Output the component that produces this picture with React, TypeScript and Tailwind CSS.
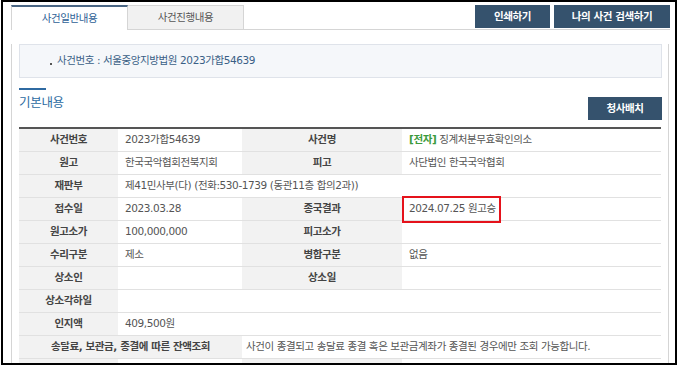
import React from 'react';

const FONT = "font-['DejaVu_Sans','Noto_Sans_CJK_KR',sans-serif]";

const label = 'bg-[#f2f2f2] text-center font-bold text-[#444] border-b border-[#e1e1e1]';
const value = 'pl-[7px] text-[#555] border-b border-[#e1e1e1] whitespace-nowrap';

export default function App() {
  return (
    <div className={`w-[680px] h-[369px] bg-white overflow-hidden text-[10.5px] tracking-[-0.4px] ${FONT}`}>
      <div className="ml-[1px] w-[676px] h-[365px] border-2 border-black overflow-hidden">
        {/* tabs + top buttons */}
        <div className="ml-[8px] w-[658px] pt-[3px] flex">
          <div className="w-[117px] h-[25px] bg-white border-t-2 border-t-[#4a6684] border-x border-x-[#d5d5d5] flex items-center justify-center text-[#2e5f96]">
            사건일반내용
          </div>
          <div className="w-[116px] h-[25px] bg-[#f1f1f1] border-t border-r border-b border-[#d5d5d5] flex items-center justify-center text-[#555]">
            사건진행내용
          </div>
          <div className="flex-1 h-[25px] border-b border-[#d5d5d5] flex justify-end items-start gap-[4px] -mr-[1px]">
            <button className="w-[75px] h-[23px] bg-[#35526d] text-white font-bold">인쇄하기</button>
            <button className="w-[116px] h-[23px] bg-[#35526d] text-white font-bold">나의 사건 검색하기</button>
          </div>
        </div>

        {/* content box */}
        <div className="ml-[8px] w-[658px] h-[400px] border-x border-[#d5d5d5] pl-[7px] pr-[6px]">
          <div className="mt-[14px] h-[34px] bg-[#f5f7fa] border border-[#dfe3ea] flex items-center pl-[30px] text-[#3a5f86]">
            <span className="w-[2px] h-[2px] bg-[#555] mr-[5px] mt-[5px]" />
            <span>사건번호 : 서울중앙지방법원 2023가합54639</span>
          </div>

          <div className="mt-[10px] flex justify-between items-start">
            <div>
              <div className="w-[27px] h-[2px] bg-[#2f6aa1]" />
              <div className="mt-[4px] leading-[17px] text-[12.5px] tracking-[-0.3px] text-[#2d6ca2]">기본내용</div>
            </div>
            <button className="mt-[9px] w-[74px] h-[23px] bg-[#35526d] text-white font-bold">청사배치</button>
          </div>

          <table className="mt-[7px] w-[642px] border-collapse border-t-2 border-[#555] table-fixed">
            <colgroup>
              <col className="w-[99px]" />
              <col className="w-[124px]" />
              <col className="w-[160px]" />
              <col className="w-[259px]" />
            </colgroup>
            <tbody>
              <tr className="h-[23px]">
                <td className={label}>사건번호</td>
                <td className={value}>2023가합54639</td>
                <td className={label}>사건명</td>
                <td className={value}>
                  <span className="text-[#3c9a3c] font-bold">[전자]</span> 징계처분무효확인의소
                </td>
              </tr>
              <tr className="h-[23px]">
                <td className={label}>원고</td>
                <td className={value}>한국국악협회전북지회</td>
                <td className={label}>피고</td>
                <td className={value}>사단법인 한국국악협회</td>
              </tr>
              <tr className="h-[23px]">
                <td className={label}>재판부</td>
                <td className={value} colSpan={3}>제41민사부(다) (전화:530-1739 (동관11층 합의2과))</td>
              </tr>
              <tr className="h-[23px]">
                <td className={label}>접수일</td>
                <td className={value}>2023.03.28</td>
                <td className={label}>종국결과</td>
                <td className={`${value} relative`}>
                  2024.07.25 원고승
                  <span className="absolute left-0 top-[-2px] w-[99px] h-[27px] border-2 border-[#e5121b]" />
                </td>
              </tr>
              <tr className="h-[23px]">
                <td className={label}>원고소가</td>
                <td className={value}>100,000,000</td>
                <td className={label}>피고소가</td>
                <td className={value}></td>
              </tr>
              <tr className="h-[23px]">
                <td className={label}>수리구분</td>
                <td className={value}>제소</td>
                <td className={label}>병합구분</td>
                <td className={value}>없음</td>
              </tr>
              <tr className="h-[23px]">
                <td className={label}>상소인</td>
                <td className={value}></td>
                <td className={label}>상소일</td>
                <td className={value}></td>
              </tr>
              <tr className="h-[23px]">
                <td className={label}>상소각하일</td>
                <td className={value} colSpan={3}></td>
              </tr>
              <tr className="h-[23px]">
                <td className={label}>인지액</td>
                <td className={value} colSpan={3}>409,500원</td>
              </tr>
              <tr className="h-[23px]">
                <td className={label} colSpan={2}>송달료, 보관금, 종결에 따른 잔액조회</td>
                <td className={`${value} !pl-[4px]`} colSpan={2}>
                  사건이 종결되고 송달료 종결 혹은 보관금계좌가 종결된 경우에만 조회 가능합니다.
                </td>
              </tr>
              <tr className="h-[23px]">
                <td className={label}></td>
                <td className={value}></td>
                <td className={label}></td>
                <td className={value}></td>
              </tr>
            </tbody>
          </table>
        </div>
      </div>
    </div>
  );
}
